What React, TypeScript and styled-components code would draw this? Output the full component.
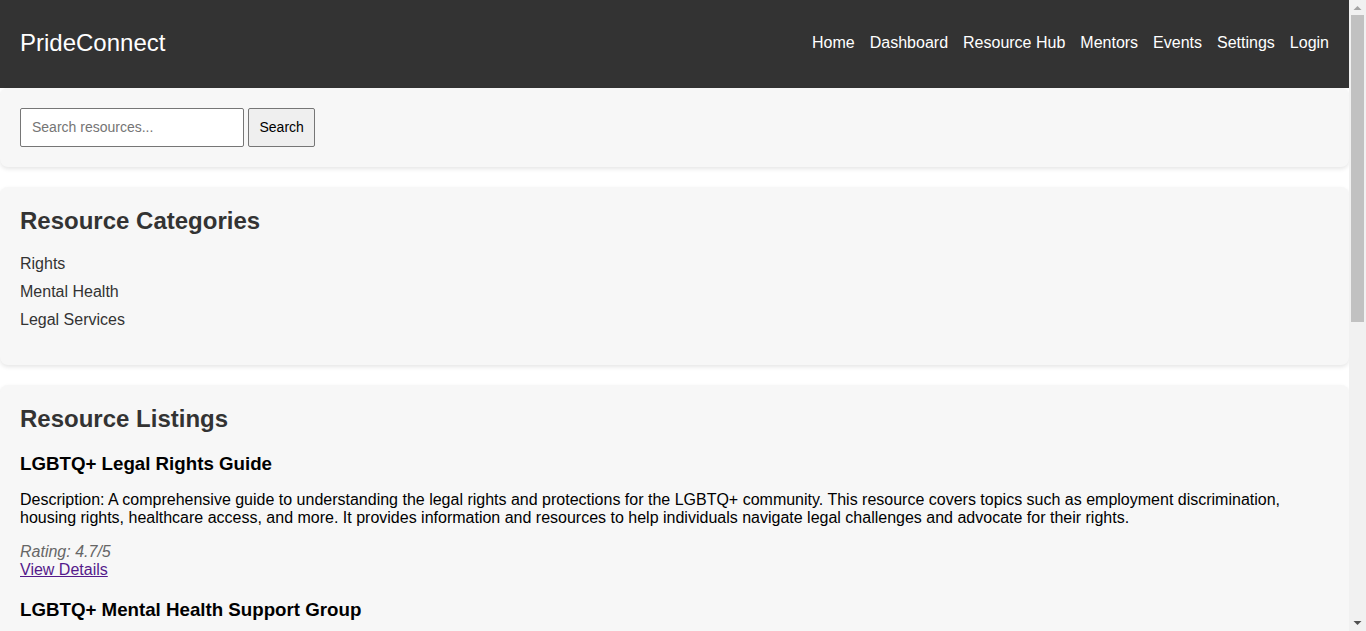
import styled, { createGlobalStyle } from "styled-components";

const GlobalStyle = createGlobalStyle`
  html, body {
    margin: 0;
    padding: 0;
    background: #ffffff;
    font-family: "Liberation Sans", Arial, sans-serif;
  }
`;

const navLinks = ["Home", "Dashboard", "Resource Hub", "Mentors", "Events", "Settings", "Login"];
const categories = ["Rights", "Mental Health", "Legal Services"];

const listings = [
  {
    title: "LGBTQ+ Legal Rights Guide",
    description:
      "Description: A comprehensive guide to understanding the legal rights and protections for the LGBTQ+ community. This resource covers topics such as employment discrimination, housing rights, healthcare access, and more. It provides information and resources to help individuals navigate legal challenges and advocate for their rights.",
    rating: "4.7/5",
  },
  {
    title: "LGBTQ+ Mental Health Support Group",
    description:
      "Description: A safe and welcoming online support group for LGBTQ+ individuals facing mental health challenges. Led by licensed therapists, the group meets weekly to share experiences, build coping strategies, and connect with others who understand.",
    rating: "4.9/5",
  },
  {
    title: "Transgender Legal Services Directory",
    description:
      "Description: A directory of legal service providers offering free or low-cost assistance with name and gender marker changes, discrimination claims, and other legal matters affecting transgender and non-binary people.",
    rating: "4.6/5",
  },
  {
    title: "Know Your Rights: Workplace Equality",
    description:
      "Description: An overview of workplace protections for LGBTQ+ employees, including guidance on reporting harassment, requesting accommodations, and finding allies within your organization.",
    rating: "4.5/5",
  },
];

// the window's scroll bar, drawn as the reference shows it
const ScrollBar = () => (
  <Track>
    <Arrow viewBox="0 0 17 17">
      <path d="M4.5 10 L8.5 6 L12.5 10 Z" fill="#a3a3a3" />
    </Arrow>
    <ThumbArea>
      <Thumb />
    </ThumbArea>
    <Arrow viewBox="0 0 17 17">
      <path d="M4.5 7 L8.5 11 L12.5 7 Z" fill="#505050" />
    </Arrow>
  </Track>
);

export default function App() {
  return (
    <>
      <GlobalStyle />
      <Page>
        <Header>
          <Logo>PrideConnect</Logo>
          <Nav>
            {navLinks.map((l) => (
              <NavLink key={l} href="#">
                {l}
              </NavLink>
            ))}
          </Nav>
        </Header>
        <Main>
          <Card>
            <SearchRow>
              <SearchInput placeholder="Search resources..." />
              <SearchButton>Search</SearchButton>
            </SearchRow>
          </Card>
          <Card>
            <SectionTitle>Resource Categories</SectionTitle>
            <CategoryList>
              {categories.map((c) => (
                <CategoryItem key={c}>{c}</CategoryItem>
              ))}
            </CategoryList>
          </Card>
          <Card>
            <SectionTitle>Resource Listings</SectionTitle>
            <Listings>
              {listings.map((r) => (
                <Listing key={r.title}>
                  <ListingTitle>{r.title}</ListingTitle>
                  <Description>{r.description}</Description>
                  <Rating>Rating: {r.rating}</Rating>
                  <DetailsLink href="#">View Details</DetailsLink>
                </Listing>
              ))}
            </Listings>
          </Card>
        </Main>
      </Page>
      <ScrollBar />
    </>
  );
}

const Page = styled.div`
  margin-right: 17px;
`;

const Track = styled.div`
  position: fixed;
  top: 0;
  right: 0;
  width: 17px;
  height: 100vh;
  display: flex;
  flex-direction: column;
  background: #f1f1f1;
`;

const Arrow = styled.svg`
  width: 17px;
  height: 17px;
  flex: none;
`;

const ThumbArea = styled.div`
  flex: 1;
  padding: 0 2px;
`;

const Thumb = styled.div`
  height: 51.5%;
  margin-top: -2px;
  background: #c1c1c1;
`;

const Header = styled.header`
  display: flex;
  justify-content: space-between;
  align-items: center;
  height: 88px;
  padding: 0 20px 2px;
  box-sizing: border-box;
  background: #333333;
`;

const Logo = styled.h1`
  margin: 0;
  font-size: 24px;
  font-weight: 400;
  color: #ffffff;
`;

const Nav = styled.nav`
  display: flex;
  gap: 15px;
`;

const NavLink = styled.a`
  color: #ffffff;
  font-size: 16px;
  text-decoration: none;
`;

const Main = styled.main`
  display: flex;
  flex-direction: column;
  gap: 20px;
  padding-bottom: 20px;
`;

const Card = styled.section`
  background: #f7f7f7;
  border-radius: 8px;
  box-shadow: 0 2px 4px rgba(0, 0, 0, 0.1);
  padding: 20px;
`;

const SearchRow = styled.div`
  display: flex;
  gap: 4px;
`;

const SearchInput = styled.input`
  box-sizing: border-box;
  width: 224px;
  height: 39px;
  padding: 0 11px 1px;
  font-family: "Liberation Sans", Arial, sans-serif;
  font-size: 14px;
  border: 1px solid #767676;
  border-radius: 2px;
  background: #ffffff;
  &::placeholder {
    color: #757575;
  }
`;

const SearchButton = styled.button`
  box-sizing: border-box;
  height: 39px;
  padding: 0 10.5px 1px;
  font-family: "Liberation Sans", Arial, sans-serif;
  font-size: 14px;
  color: #000000;
  background: #efefef;
  border: 1px solid #767676;
  border-radius: 2px;
`;

const SectionTitle = styled.h2`
  margin: 0;
  font-size: 24px;
  line-height: 28px;
  font-weight: 700;
  color: #333333;
`;

const CategoryList = styled.ul`
  list-style: none;
  margin: 15px 0 11px;
  padding: 0;
`;

const CategoryItem = styled.li`
  font-size: 16px;
  line-height: 28px;
  color: #333333;
`;

const Listings = styled.div`
  padding-top: 20px;
`;

const Listing = styled.article`
  margin-bottom: 20px;
`;

const ListingTitle = styled.h3`
  margin: 0 0 16px;
  font-size: 18.72px;
  line-height: normal;
  font-weight: 700;
  color: #000000;
`;

const Description = styled.p`
  margin: 0 0 16px;
  font-size: 16px;
  line-height: normal;
  color: #000000;
`;

const Rating = styled.p`
  margin: 0;
  font-size: 16px;
  line-height: normal;
  font-style: italic;
  color: #666666;
`;

const DetailsLink = styled.a`
  display: inline-block;
  font-size: 16px;
  line-height: normal;
  color: #551a8b;
  text-decoration: underline;
`;
